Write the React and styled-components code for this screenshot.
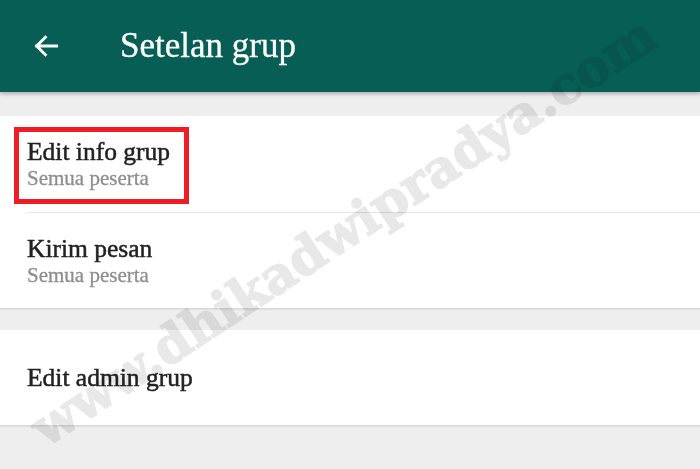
import styled, { createGlobalStyle } from "styled-components";

const Global = createGlobalStyle`
    html, body {
        margin: 0;
        padding: 0;
        background: #eeeeee;
    }
    body {
        font-family: "Liberation Serif", "DejaVu Serif", serif;
    }
`

const Page = styled.div`
    position: relative;
    width: 700px;
    height: 469px;
    overflow: hidden;
    background: #eeeeee;
`

const TopBar = styled.header`
    height: 92px;
    background: #075e55;
    display: flex;
    align-items: center;
    box-shadow: 0 2px 4px rgba(0, 0, 0, 0.28);
    position: relative;
    z-index: 1;
    color: #ffffff;
`

const BackButton = styled.div`
    width: 120px;
    display: flex;
    align-items: center;
    padding-left: 31px;
    box-sizing: border-box;
    svg {
        display: block;
    }
`

const Title = styled.h1`
    margin: 0;
    font-size: 35px;
    font-weight: normal;
    line-height: 40px;
    -webkit-text-stroke: 0.3px #ffffff;
`

const Section = styled.section`
    background: #ffffff;
    margin-top: ${(p) => p.gap}px;
    border-bottom: 1px solid #d9d9d9;
    box-shadow: 0 1px 1px rgba(0, 0, 0, 0.06);
`

const Row = styled.div`
    position: relative;
    height: ${(p) => p.height}px;
    padding-left: 27px;
    display: flex;
    flex-direction: column;
    justify-content: center;
`

const Divider = styled.div`
    height: 1px;
    margin-left: 27px;
    background: #e4e4e4;
`

const RowTitle = styled.div`
    font-size: 25.5px;
    color: #222222;
    line-height: 28px;
    -webkit-text-stroke: 0.5px #222222;
`

const RowSub = styled.div`
    font-size: 21px;
    color: #8e8e8e;
    line-height: 24px;
    -webkit-text-stroke: 0.3px #8e8e8e;
`

const Highlight = styled.div`
    position: absolute;
    left: 14px;
    top: 11px;
    width: 175px;
    height: 77px;
    border: 5px solid #ee1c25;
    box-sizing: border-box;
    pointer-events: none;
`

const Watermark = styled.div`
    position: absolute;
    left: 50%;
    top: 50%;
    transform: translate(-50%, -50%) rotate(-33.3deg);
    margin-left: -7px;
    margin-top: -4px;
    font-family: "DejaVu Serif", "Liberation Serif", serif;
    font-weight: bold;
    font-size: 51px;
    color: #e8e8e8;
    -webkit-text-stroke: 1.5px #e8e8e8;
    mix-blend-mode: multiply;
    white-space: nowrap;
    z-index: 2;
    pointer-events: none;
`

const BackArrow = () => (
    <svg width="30" height="30" viewBox="0 0 24 24" fill="none">
        <path
            d="M20.5 12H4.5M11.5 5L4.5 12l7 7"
            stroke="#ffffff"
            strokeWidth="2.3"
            strokeLinecap="square"
        />
    </svg>
)

const App = () => {
    return (
        <Page>
            <Global />
            <TopBar>
                <BackButton>
                    <BackArrow />
                </BackButton>
                <Title>Setelan grup</Title>
            </TopBar>

            <Section gap={24}>
                <Row height={96}>
                    <RowTitle>Edit info grup</RowTitle>
                    <RowSub>Semua peserta</RowSub>
                    <Highlight />
                </Row>
                <Divider />
                <Row height={95}>
                    <RowTitle>Kirim pesan</RowTitle>
                    <RowSub>Semua peserta</RowSub>
                </Row>
            </Section>

            <Section gap={21}>
                <Row height={95}>
                    <RowTitle>Edit admin grup</RowTitle>
                </Row>
            </Section>

            <Watermark>www.dhikadwipradya.com</Watermark>
        </Page>
    )
}

export default App
